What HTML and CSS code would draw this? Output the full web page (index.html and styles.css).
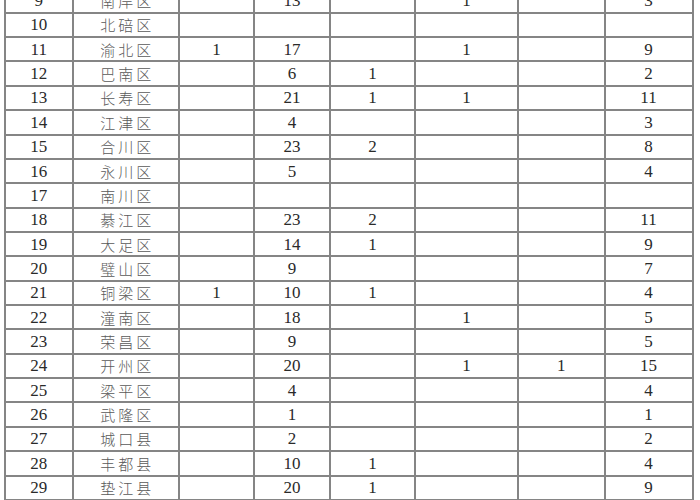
FILE: index.html
```html
<!DOCTYPE html>
<html lang="zh-CN">
<head>
<meta charset="utf-8">
<title>表格</title>
<link rel="stylesheet" href="styles.css">
</head>
<body>
<div class="sheet">
<div class="c">9</div><div class="c n">南岸区</div><div class="c"></div><div class="c">13</div><div class="c"></div><div class="c">1</div><div class="c"></div><div class="c">3</div>
<div class="c">10</div><div class="c n">北碚区</div><div class="c"></div><div class="c"></div><div class="c"></div><div class="c"></div><div class="c"></div><div class="c"></div>
<div class="c">11</div><div class="c n">渝北区</div><div class="c">1</div><div class="c">17</div><div class="c"></div><div class="c">1</div><div class="c"></div><div class="c">9</div>
<div class="c">12</div><div class="c n">巴南区</div><div class="c"></div><div class="c">6</div><div class="c">1</div><div class="c"></div><div class="c"></div><div class="c">2</div>
<div class="c">13</div><div class="c n">长寿区</div><div class="c"></div><div class="c">21</div><div class="c">1</div><div class="c">1</div><div class="c"></div><div class="c">11</div>
<div class="c">14</div><div class="c n">江津区</div><div class="c"></div><div class="c">4</div><div class="c"></div><div class="c"></div><div class="c"></div><div class="c">3</div>
<div class="c">15</div><div class="c n">合川区</div><div class="c"></div><div class="c">23</div><div class="c">2</div><div class="c"></div><div class="c"></div><div class="c">8</div>
<div class="c">16</div><div class="c n">永川区</div><div class="c"></div><div class="c">5</div><div class="c"></div><div class="c"></div><div class="c"></div><div class="c">4</div>
<div class="c">17</div><div class="c n">南川区</div><div class="c"></div><div class="c"></div><div class="c"></div><div class="c"></div><div class="c"></div><div class="c"></div>
<div class="c">18</div><div class="c n">綦江区</div><div class="c"></div><div class="c">23</div><div class="c">2</div><div class="c"></div><div class="c"></div><div class="c">11</div>
<div class="c">19</div><div class="c n">大足区</div><div class="c"></div><div class="c">14</div><div class="c">1</div><div class="c"></div><div class="c"></div><div class="c">9</div>
<div class="c">20</div><div class="c n">璧山区</div><div class="c"></div><div class="c">9</div><div class="c"></div><div class="c"></div><div class="c"></div><div class="c">7</div>
<div class="c">21</div><div class="c n">铜梁区</div><div class="c">1</div><div class="c">10</div><div class="c">1</div><div class="c"></div><div class="c"></div><div class="c">4</div>
<div class="c">22</div><div class="c n">潼南区</div><div class="c"></div><div class="c">18</div><div class="c"></div><div class="c">1</div><div class="c"></div><div class="c">5</div>
<div class="c">23</div><div class="c n">荣昌区</div><div class="c"></div><div class="c">9</div><div class="c"></div><div class="c"></div><div class="c"></div><div class="c">5</div>
<div class="c">24</div><div class="c n">开州区</div><div class="c"></div><div class="c">20</div><div class="c"></div><div class="c">1</div><div class="c">1</div><div class="c">15</div>
<div class="c">25</div><div class="c n">梁平区</div><div class="c"></div><div class="c">4</div><div class="c"></div><div class="c"></div><div class="c"></div><div class="c">4</div>
<div class="c">26</div><div class="c n">武隆区</div><div class="c"></div><div class="c">1</div><div class="c"></div><div class="c"></div><div class="c"></div><div class="c">1</div>
<div class="c">27</div><div class="c n">城口县</div><div class="c"></div><div class="c">2</div><div class="c"></div><div class="c"></div><div class="c"></div><div class="c">2</div>
<div class="c">28</div><div class="c n">丰都县</div><div class="c"></div><div class="c">10</div><div class="c">1</div><div class="c"></div><div class="c"></div><div class="c">4</div>
<div class="c">29</div><div class="c n">垫江县</div><div class="c"></div><div class="c">20</div><div class="c">1</div><div class="c"></div><div class="c"></div><div class="c">9</div>
</div>
</body>
</html>
```
FILE: styles.css
```css
html, body {
  margin: 0;
  padding: 0;
  background: #ffffff;
  overflow: hidden;
}
.sheet {
  display: grid;
  grid-template-columns: 65.5px 104.5px 73px 74px 83px 101px 84.5px 86px;
  grid-auto-rows: 22.37px;
  gap: 2px;
  width: max-content;
  margin-top: -12.67px;
  margin-left: 4px;
  border: 2px solid #858585;
  background: #858585;
}
.c {
  background: #ffffff;
  display: flex;
  align-items: center;
  justify-content: center;
  font-family: "Liberation Serif", "Times New Roman", serif;
  font-size: 17px;
  color: #2a2a2a;
  line-height: 1;
}
.n {
  font-family: "Noto Sans CJK SC", sans-serif;
  font-weight: 300;
  font-size: 15px;
  letter-spacing: 3px;
  padding-left: 3px;
  color: #5a5a5a;
}
```
